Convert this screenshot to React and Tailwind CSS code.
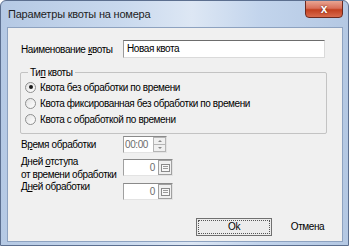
import React from "react";

const font = { fontFamily: '"Liberation Sans", Arial, sans-serif' };

function Radio({ checked }) {
  return (
    <span className="w-[11px] h-[11px] rounded-full border border-[#8e8f8f] bg-[linear-gradient(135deg,#e2e2e2,#ffffff)] flex items-center justify-center shrink-0">
      {checked && <span className="w-[4px] h-[4px] rounded-full bg-[#1a1a1a]" />}
    </span>
  );
}

function DaysBox() {
  return (
    <div className="w-[50px] h-[17px] flex border-t border-l border-t-[#8a8a8a] border-l-[#a0a0a0] border-r border-b border-r-[#e3e3e3] border-b-[#e3e3e3] bg-white shrink-0">
      <div className="flex-1 text-right pr-[3px] text-[#6d6d6d] leading-[15px]">0</div>
      <div className="w-[14px] h-[15px] border border-[#a0a0a0] bg-[#f0f0f0] flex items-center justify-center">
        <div className="w-[9px] h-[8px] border border-[#8a8a8a] bg-[#f7f7f7] flex flex-col justify-center gap-[1px] px-[1px]">
          <div className="h-[1px] bg-[#9a9a9a]" />
          <div className="h-[1px] bg-[#9a9a9a]" />
        </div>
      </div>
    </div>
  );
}

export default function App() {
  return (
    <div
      className="w-[349px] h-[246px] flex flex-col bg-[linear-gradient(90deg,#b5c9e4_0%,#c9d9ee_35%,#dde7f4_55%,#c2d4ec_75%,#b4c8e3_100%)] border border-[#5c6f8f] rounded-t-[6px] text-[10px] tracking-[-0.4px] text-black overflow-hidden whitespace-nowrap"
      style={font}
    >
      <div className="h-[26px] relative shrink-0">
        <div className="pl-[7px] pt-[6px] text-[11px] tracking-[-0.2px] text-[#1e1e1e] leading-[14px]">
          Параметры квоты на номера
        </div>
        <div className="absolute top-[-1px] right-[5px] w-[38px] h-[18px] rounded-b-[4px] border border-[#6b2a20] bg-[linear-gradient(180deg,#e9a592_0%,#d9705a_45%,#c2401f_55%,#d86a4c_100%)] flex items-center justify-center">
          <span className="text-white text-[12px] font-bold leading-none tracking-normal [text-shadow:0_0_2px_#5a1a10]">x</span>
        </div>
      </div>
      <div className="h-[215px] ml-[6px] mr-[5px] bg-[#f0f0f0] border border-[#8da2c0] flex flex-col">
        <div className="flex items-center pl-[13px] mt-[12px] h-[18px]">
          <span className="w-[102px]">
            Наименование <span className="underline">к</span>воты
          </span>
          <div className="w-[202px] h-[18px] bg-white border border-t-[#6d6d6d] border-l-[#9a9a9a] border-r-[#dadada] border-b-[#dadada] pl-[3px] leading-[16px]">
            Новая квота
          </div>
        </div>
        <div className="relative ml-[12px] mt-[14px] w-[307px] h-[62px] border border-[#c3c3c3] rounded-[2px] pl-[4px] pt-[6px] flex flex-col">
          <span className="absolute left-[7px] top-[-7px] px-[2px] bg-[#f0f0f0] leading-[13px]">
            Ти<span className="underline">п</span> квоты
          </span>
          <div className="flex items-center gap-[4px] h-[16px]">
            <Radio checked />
            <span>Квота без обработки по времени</span>
          </div>
          <div className="flex items-center gap-[4px] h-[16px]">
            <Radio />
            <span>Квота фиксированная без обработки по времени</span>
          </div>
          <div className="flex items-center gap-[4px] h-[16px]">
            <Radio />
            <span>Квота с обработкой по времени</span>
          </div>
        </div>
        <div className="flex items-center pl-[13px] mt-[2px] h-[17px]">
          <span className="w-[102px]">
            В<span className="underline">р</span>емя обработки
          </span>
          <div className="w-[44px] h-[17px] flex bg-white border-t border-l border-t-[#8a8a8a] border-l-[#a0a0a0] border-r border-b border-r-[#e3e3e3] border-b-[#e3e3e3]">
            <div className="flex-1 pl-[1px] text-[#6d6d6d] leading-[15px]">00:00</div>
            <div className="w-[13px] flex flex-col">
              <div className="flex-1 border border-[#b5b5b5] bg-[#f0f0f0] flex items-center justify-center">
                <div className="w-0 h-0 border-l-[2px] border-r-[2px] border-b-[2px] border-l-transparent border-r-transparent border-b-[#8a8a8a]" />
              </div>
              <div className="flex-1 border border-[#b5b5b5] border-t-0 bg-[#f0f0f0] flex items-center justify-center">
                <div className="w-0 h-0 border-l-[2px] border-r-[2px] border-t-[2px] border-l-transparent border-r-transparent border-t-[#8a8a8a]" />
              </div>
            </div>
          </div>
        </div>
        <div className="flex items-start pl-[13px] mt-[2px] h-[25px]">
          <span className="w-[102px] leading-[13px]">
            Дней <span className="underline">о</span>тступа
            <br />
            от времени обработки
          </span>
          <div className="mt-[4px]">
            <DaysBox />
          </div>
        </div>
        <div className="flex items-start pl-[13px] h-[20px]">
          <span className="w-[102px] leading-[13px]">
            Д<span className="underline">н</span>ей обработки
          </span>
          <div className="mt-[3px]">
            <DaysBox />
          </div>
        </div>
        <div className="flex justify-end gap-[2px] pr-[1px] mt-[18px]">
          <div className="w-[76px] h-[18px] border border-[#707070] bg-[#ececec] p-[1px]">
            <div className="w-full h-full border border-dotted border-[#555] flex items-center justify-center leading-none">
              Ok
            </div>
          </div>
          <div className="w-[67px] h-[18px] flex items-center justify-center leading-none">
            Отмена
          </div>
        </div>
      </div>
    </div>
  );
}
